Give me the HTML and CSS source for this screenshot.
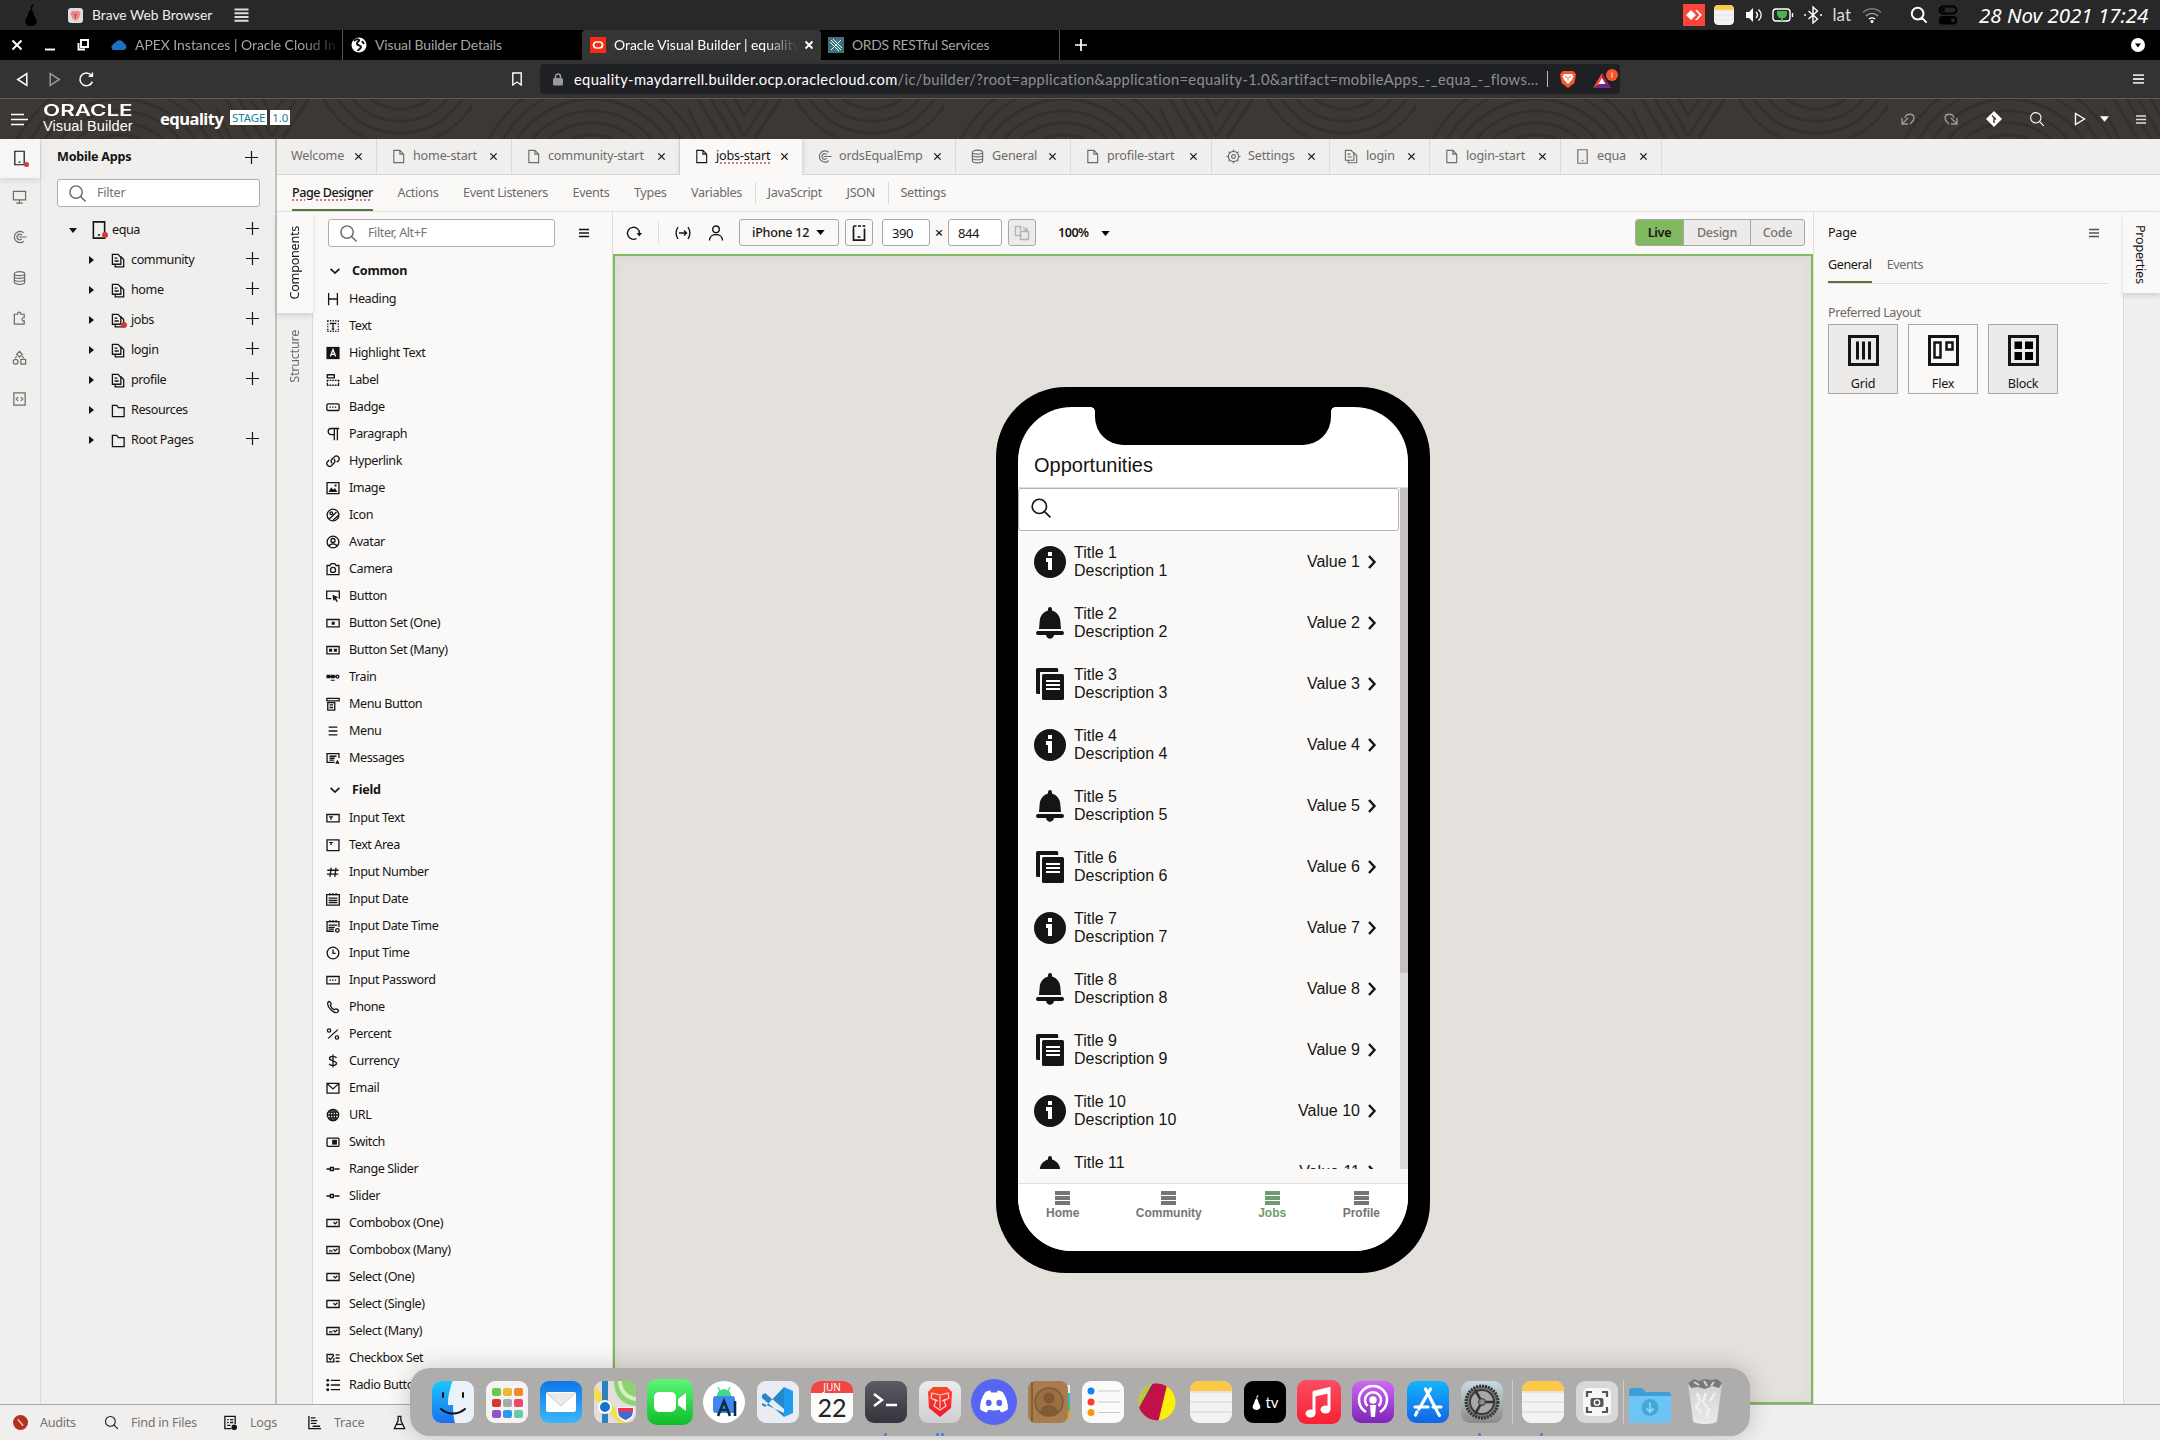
FILE: index.html
```html
<!DOCTYPE html>
<html lang="en">
<head>
<meta charset="utf-8">
<title>Oracle Visual Builder | equality</title>
<link rel="stylesheet" href="styles.css">
</head>
<body>
<svg class="defs" aria-hidden="true">
<defs>
<linearGradient id="g-blue" x2="0" y2="1"><stop stop-color="#1076e8"/><stop offset="1" stop-color="#3bb8f7"/></linearGradient>
<linearGradient id="g-green" x2="0" y2="1"><stop stop-color="#5df777"/><stop offset="1" stop-color="#0dbd29"/></linearGradient>
<linearGradient id="g-finder" x2="0" y2="1"><stop stop-color="#19c8fb"/><stop offset="1" stop-color="#1c6ff0"/></linearGradient>
<linearGradient id="g-dark" x2="0" y2="1"><stop stop-color="#5c5a62"/><stop offset="1" stop-color="#35333b"/></linearGradient>
<linearGradient id="g-light" x2="0" y2="1"><stop stop-color="#ececec"/><stop offset="1" stop-color="#cfcfd2"/></linearGradient>
<linearGradient id="g-red" x2="0" y2="1"><stop stop-color="#fb4d64"/><stop offset="1" stop-color="#fa1f31"/></linearGradient>
<linearGradient id="g-purple" x2="0" y2="1"><stop stop-color="#cf68f5"/><stop offset="1" stop-color="#7c25b8"/></linearGradient>
<linearGradient id="g-app" x2="0" y2="1"><stop stop-color="#14b4fb"/><stop offset="1" stop-color="#1265e6"/></linearGradient>
<linearGradient id="g-gear" x2="0" y2="1"><stop stop-color="#c6dbe3"/><stop offset="1" stop-color="#8b8a87"/></linearGradient>
<linearGradient id="g-trash" x2="0" y2="1"><stop stop-color="#cfd2d2"/><stop offset="1" stop-color="#e9eae9"/></linearGradient>
<linearGradient id="g-lion" x2="0" y2="1"><stop stop-color="#fb4a25"/><stop offset="1" stop-color="#f7142f"/></linearGradient>
</defs>
<symbol id="x" viewBox="0 0 10 10"><path d="M1.5 1.5l7 7m0-7l-7 7"/></symbol>
<symbol id="plus" viewBox="0 0 14 14"><path d="M7 0v14M0 7h14"/></symbol>
<symbol id="burger" viewBox="0 0 12 12"><path d="M0 1.8h12M0 6h12M0 10.2h12"/></symbol>
<symbol id="caret" viewBox="0 0 10 6"><path d="M0 0h10L5 6z"/></symbol>
<symbol id="search" viewBox="0 0 20 20"><path d="M13.500 13.500L18.500 18.500M15 8.500a6.500 6.500 0 1 1-13 0a6.500 6.500 0 1 1 13 0z"/></symbol>
<symbol id="page" viewBox="0 0 16 16"><path d="M3 1.500h6.500L13.500 5.500v9H3zM9.500 1.500v4h4"/></symbol>
<symbol id="pages" viewBox="0 0 16 16"><path d="M1.500 1.500h6L10.500 4.500v7.500h-9zM3.800 5.500h3M3.800 8.500h4.500M4.500 12v2.700h9V7L10.500 4"/></symbol>
<symbol id="mobile" viewBox="0 0 16 16"><path d="M3 .8h10v14.400H3zM7 12.500h2"/></symbol>
<symbol id="desktop" viewBox="0 0 16 16"><path d="M1.500 2h13v9h-13zM8 11v3.500M4.500 14.500h7"/></symbol>
<symbol id="conn" viewBox="0 0 16 16"><path d="M12.500 3.500a6 6 0 1 0 0 9M10.500 6a3 3 0 1 0 0 4M7 8h8.500"/></symbol>
<symbol id="db" viewBox="0 0 16 16"><path d="M2.500 3.500c0-3 11-3 11 0v9c0 3-11 3-11 0zM2.500 3.500c0 2.600 11 2.600 11 0M2.500 6.500c0 2.600 11 2.600 11 0M2.500 9.500c0 2.600 11 2.600 11 0"/></symbol>
<symbol id="puzzle" viewBox="0 0 16 16"><path d="M2.500 4H6c-.5-3 4-3 3.500 0H13v3.500c-3-.5-3 4 0 3.500V14.500H2.500z"/></symbol>
<symbol id="shapes" viewBox="0 0 16 16"><path d="M8 1l3 3-3 3-3-3zM9.500 9.500h5v5h-5zM6.500 12a2.600 2.600 0 1 1-5.200 0a2.600 2.600 0 1 1 5.200 0zM5 6L3.500 8M11 6l1.500 2"/></symbol>
<symbol id="code" viewBox="0 0 16 16"><path d="M2 1.500h12v13H2zM6.500 6l-2 2 2 2M9.500 6l2 2-2 2"/></symbol>
<symbol id="folder" viewBox="0 0 16 16"><path d="M1.500 2.500h4.500l2 2.500H14v9.500H1.500z"/></symbol>
<symbol id="gear" viewBox="0 0 16 16"><path d="M13.500 8a5.500 5.500 0 1 1-11 0a5.500 5.500 0 1 1 11 0zM10 8a2 2 0 1 1-4 0a2 2 0 1 1 4 0zM8 .5v2M8 13.500v2M.5 8h2M13.500 8h2M2.700 2.700l1.400 1.400M11.900 11.900l1.400 1.400M2.700 13.300l1.400-1.400M11.900 4.100l1.400-1.400"/></symbol>
<symbol id="chev" viewBox="0 0 10 6"><path d="M.6.8L5 5 9.400.8"/></symbol>

<symbol id="c-heading" viewBox="0 0 16 16"><path d="M3 1v14M13 1v14M3 8h10"/></symbol>
<symbol id="c-text" viewBox="0 0 16 16"><path d="M1.500 2h13M1.500 14h13M2 2v12M14 2v12" stroke-dasharray="1.500 1.500"/><path d="M5 6V5h6v1M8 5v6.500M6.500 11.500h3"/></symbol>
<symbol id="c-hl" viewBox="0 0 16 16"><path class="fill" d="M.5 1h15v14H.5z"/><path d="M5 12l3-8 3 8M6 9.500h4" stroke="#fff"/></symbol>
<symbol id="c-label" viewBox="0 0 16 16"><path d="M1.500 2h8v3.500h-8z"/><path d="M1 8.500h14M1 14h14M1.500 8v6M14.500 8v6" stroke-dasharray="2 1"/></symbol>
<symbol id="c-badge" viewBox="0 0 16 16"><rect x="1" y="4.500" width="14" height="7.500" rx="1.500"/><path d="M4 8.200h8" stroke-dasharray="1.600 1.400"/></symbol>
<symbol id="c-para" viewBox="0 0 16 16"><path d="M15 1.700H6a3.500 3.500 0 0 0 0 7h3.500M9.500 1.700V15M13 1.700V15"/></symbol>
<symbol id="c-link" viewBox="0 0 16 16"><path d="M7 10.500a3.200 3.200 0 0 1-.2-4.500l3-3a3.200 3.200 0 0 1 4.500 4.500l-2 2M9 5.800a3.200 3.200 0 0 1 .2 4.500l-3 3a3.200 3.200 0 0 1-4.500-4.500l2-2"/></symbol>
<symbol id="c-image" viewBox="0 0 16 16"><path d="M1.200 1.800h13.600v12.700H1.200z"/><path class="fill" d="M3 12.500L6 7l2.200 3 2-2 2.800 4.500zM9.800 4h2.200v2.200H9.800z"/></symbol>
<symbol id="c-icon" viewBox="0 0 16 16"><circle cx="8" cy="8" r="6.700"/><circle cx="6" cy="6" r="1.600"/><path d="M3.500 12.500l3-2.500L12 4.500M8 14l6-5.500"/></symbol>
<symbol id="c-avatar" viewBox="0 0 16 16"><circle cx="8" cy="8" r="6.700"/><circle cx="8" cy="6.300" r="2.300"/><path d="M3.500 12.800c1-3.500 8-3.500 9 0"/></symbol>
<symbol id="c-camera" viewBox="0 0 16 16"><path d="M1.200 4h3.300L6 1.800h4L11.500 4h3.300v10.500H1.200z"/><circle cx="8" cy="9" r="2.900"/></symbol>
<symbol id="c-button" viewBox="0 0 16 16"><path d="M6 11H.8V2.500h14.400V11"/><path class="fill" d="M7.500 6.500l6.500 3-2.500 1.200 2 3.300-1.500.9-2-3.200-1.800 1.800z"/></symbol>
<symbol id="c-bs1" viewBox="0 0 16 16"><path d="M1 4h14v8.500H1z"/><path class="fill" d="M6.500 6.500h3.500v3.500H6.500z"/></symbol>
<symbol id="c-bs2" viewBox="0 0 16 16"><path d="M1 4h14v8.500H1z"/><path class="fill" d="M3.500 6.500H7v3.500H3.500zM9 6.500h3.500v3.500H9z"/></symbol>
<symbol id="c-train" viewBox="0 0 16 16"><path class="fill" d="M.5 5.500h4.500v4H.5zM5.500 5.500h4.500v4H5.500zM5.500 11h4.500v1.300H5.500z"/><path d="M4 7.500h8"/><circle cx="13" cy="7.500" r="1.700"/></symbol>
<symbol id="c-mbtn" viewBox="0 0 16 16"><path d="M1 1.500h14v3H1zM2 6.500h8v8.500H2zM4 9h4M4 12h4"/></symbol>
<symbol id="c-menu" viewBox="0 0 16 16"><path d="M3 3.500h10M3 8h10M3 12.500h10"/></symbol>
<symbol id="c-msg" viewBox="0 0 16 16"><path d="M10 13H1.200V3h13.600v5M4 6h8M4 8.300h6M4 10.500h5"/><path class="fill" d="M13 10l2.500 4.500h-5z"/></symbol>
<symbol id="c-itext" viewBox="0 0 16 16"><path d="M1 4h14v8.500H1z"/><path class="fill" d="M3.500 6H8v1.300H6.500V10H5V7.300H3.500z"/></symbol>
<symbol id="c-area" viewBox="0 0 16 16"><path d="M1.200 2.200h13.600v12.300H1.200z"/><path class="fill" d="M3.500 4.500H8v1.300H6.500V8H5V5.800H3.500z"/></symbol>
<symbol id="c-num" viewBox="0 0 16 16"><path d="M6 3L4.500 13.500M11.500 3L10 13.500M1.500 6h13M1 10.500h13"/></symbol>
<symbol id="c-date" viewBox="0 0 16 16"><path d="M.8 3h14.400v12H.8zM4.500 1v3M8 1v3M11.500 1v3M3 7h10M3 9.500h10M3 12h10"/></symbol>
<symbol id="c-dt" viewBox="0 0 16 16"><path d="M9 14H1.200V3h13.600v6M4.500 1v3M8 1v3M11.500 1v3M3 7h10M3 9.500h7M3 11.500h6"/><circle cx="13" cy="13" r="2"/></symbol>
<symbol id="c-time" viewBox="0 0 16 16"><circle cx="8" cy="8" r="6.700"/><path d="M8 4v4.500h3"/></symbol>
<symbol id="c-pass" viewBox="0 0 16 16"><path d="M1 4h14v8.500H1z"/><path d="M4 8.200h8" stroke-dasharray="1.600 1.400"/></symbol>
<symbol id="c-phone" viewBox="0 0 16 16"><path d="M2 3c1.500-2 2.500-1.500 3.500.5s-.5 2-.5 3c1 2.500 2 3.500 4.500 4.500 1 0 1-1.500 3-.5s2.500 2 .5 3.500c-3.500 2-12-5-11-11z"/></symbol>
<symbol id="c-pct" viewBox="0 0 16 16"><path d="M13.500 3L2.500 13"/><circle cx="3.500" cy="4" r="1.900"/><circle cx="12.500" cy="12" r="1.900"/></symbol>
<symbol id="c-cur" viewBox="0 0 16 16"><path d="M12 4.500C10.500 2 4 2 4 5s8 2.500 8 5.700-6.800 3.300-8.500.5M8 .5v15"/></symbol>
<symbol id="c-mail" viewBox="0 0 16 16"><path d="M1.200 2.800h13.600v11H1.200zM1.500 3L8 9l6.500-6"/></symbol>
<symbol id="c-url" viewBox="0 0 16 16"><circle cx="8" cy="8" r="6.500"/><ellipse cx="8" cy="8" rx="3" ry="6.500"/><path d="M8 1.500v13M1.500 8h13M2.500 4.700h11M2.500 11.300h11"/></symbol>
<symbol id="c-switch" viewBox="0 0 16 16"><rect x="1.200" y="3.500" width="13.600" height="9.500" rx="1"/><path class="fill" d="M7 5.500h5.500V11H7z"/></symbol>
<symbol id="c-slider" viewBox="0 0 16 16"><path d="M.5 8H5M9.500 8H15.500M5 6.300h3.400v3.400H5z"/></symbol>
<symbol id="c-combo" viewBox="0 0 16 16"><path d="M1 4h14v8H1z"/><path d="M8.500 7l2 2 2.500-2.500"/></symbol>
<symbol id="c-combom" viewBox="0 0 16 16"><path d="M1 4h14v8H1zM3.500 9h4"/><path d="M8.500 7l2 2 2.500-2.500"/></symbol>
<symbol id="c-check" viewBox="0 0 16 16"><path d="M9 8v4.500H1.200V4H9M3 7.500l2 2.500 4-5M11 4.500h4.500M11 8h4.500M11 12h4.500"/></symbol>
<symbol id="c-radio" viewBox="0 0 16 16"><path d="M5.500 2.700H16M5.500 8H16M5.500 13.300H16"/><circle class="fill" cx="2" cy="2.700" r="1.700"/><circle class="fill" cx="2" cy="8" r="1.700"/><circle class="fill" cx="2" cy="13.300" r="1.700"/></symbol>

<symbol id="p-info" viewBox="0 0 32 32"><circle cx="16" cy="16" r="16" fill="#161513"/><path d="M14 6h4v4h-4zM12 12h6v12h-4v-8h-2z" fill="#fff"/></symbol>
<symbol id="p-bell" viewBox="0 0 32 32"><path d="M14 2a2 2 0 0 1 4 0v1.500c5 1.500 8 5.500 8.300 10.500L27 22H5l.7-8C6 9 9 5 14 3.500zM4 24h24a2 2 0 0 1 0 4h-8c-1 5-7 5-8 0H4a2 2 0 0 1 0-4z" fill="#161513"/></symbol>
<symbol id="p-docs" viewBox="0 0 32 32"><path d="M3.500 0H23a1.500 1.500 0 0 1 1.200 1.500V4H6v22H3.500A1.500 1.500 0 0 1 2 24.500v-23A1.500 1.500 0 0 1 3.500 0z" fill="#161513"/><rect x="8" y="6" width="22" height="26" rx="1.500" fill="#161513"/><path d="M12 13h14M12 17h14M12 21h14" stroke="#fff" stroke-width="2"/></symbol>

<symbol id="d-notes" viewBox="0 0 42 42"><rect width="42" height="42" rx="9" fill="#f4f2f3"/><path d="M0 10V9a9 9 0 0 1 9-9h24a9 9 0 0 1 9 9v1z" fill="#fdc846"/><path d="M0 11h42M0 21h42M0 31h42" stroke="#d6d4d5"/></symbol>
<symbol id="pear" viewBox="0 0 14 22"><path d="M7 6c3 0 2 4 4 7 4 6 0 9-4 9s-8-3-4-9c2-3 1-7 4-7zM7 6c-.5-3 0-4 2-6l1 1C8 3 8 4 8 6z"/></symbol>
</svg>

<header class="macbar">
  <svg class="m-pear"><use href="#pear"/></svg>
  <svg class="m-brave" viewBox="0 0 15 15"><rect width="15" height="15" rx="3" fill="#ddd"/><path d="M4 3h7l1.500 2.500-1.800 5L7.500 13l-3.200-2.500-1.800-5z" fill="#e88"/><path d="M6 6l1.500 1L9 6M7.500 7v3" stroke="#b33" fill="none"/></svg>
  <span class="m-app">Brave Web Browser</span>
  <svg class="ln m-burger" viewBox="0 0 14 14"><path d="M0 1.500h14M0 5.200h14M0 9h14M0 12.700h14"/></svg>
  <div class="m-right">
    <svg class="i22" viewBox="0 0 22 22"><path fill="#fb443a" d="M0 0h22v22H0z"/><path fill="#fff" d="M8 6l5 5-5 5-5-5zM12 6h2l5 5-5 5h-2l4.500-5z"/></svg>
    <svg class="i20"><use href="#d-notes"/></svg>
    <svg class="i18 ln" viewBox="0 0 18 18"><path d="M1 6h3l4-4v14l-4-4H1z" fill="#fff" stroke="none"/><path d="M11 6c2 2 2 4 0 6M13.500 3.500c3.500 3.500 3.500 7.500 0 11"/></svg>
    <svg class="i22 ln" viewBox="0 0 22 18"><rect x="1" y="3" width="17" height="12" rx="3"/><path d="M20.500 7v4"/><path d="M5 5h10v4l-2 3h-2v3H9v-3H7L5 9z" fill="#4cb050" stroke="none"/></svg>
    <svg class="i20 ln" viewBox="0 0 20 20"><path d="M5.500 6l9 8-4.500 4V2l4.500 4-9 8M1 10h2M17 10h2"/></svg>
    <span class="m-lat">lat</span>
    <svg class="i20 ln" viewBox="0 0 20 20"><path d="M1 7.500c5-5 13-5 18 0" stroke="#777"/><path d="M4 11c3.500-3.500 8.500-3.500 12 0" stroke="#aaa"/><path d="M7 14c2-1.500 4-1.500 6 0"/><circle cx="10" cy="16.500" r="1.500" fill="#fff" stroke="none"/></svg>
    <svg class="m-search ln"><use href="#search"/></svg>
    <svg class="i20" viewBox="0 0 20 20"><rect x="1.500" y="1.500" width="17" height="7" rx="3.500" stroke="#000" stroke-width="1.800" fill="none"/><circle cx="5" cy="5" r="2"/><rect x=".8" y="11" width="18.400" height="8.500" rx="4"/><circle cx="15" cy="15.200" r="2" fill="#282828"/></svg>
    <span class="m-date">28 Nov 2021 17:24</span>
  </div>
</header>

<nav class="btabs">
  <div class="bwin ln">
    <svg viewBox="0 0 12 12"><path d="M1.500 1.500l9 9m0-9l-9 9"/></svg>
    <svg viewBox="0 0 12 12"><path d="M1 10.500h10"/></svg>
    <svg viewBox="0 0 12 12"><path d="M4 1h7v7H4zM1.500 4v6.500H8"/></svg>
  </div>
  <div class="btab b1"><svg viewBox="0 0 16 16"><path fill="#1b70bf" d="M2.500 13a3 3 0 0 1-.5-5.500C3 6 4 6 5 5c2-3 7-2 7.500 1C16 7 16.500 12 13 13z"/></svg><span>APEX Instances | Oracle Cloud In</span></div>
  <div class="btab b2"><svg viewBox="0 0 16 16"><circle cx="8" cy="8" r="7.500" fill="#fff"/><path d="M3 4c2-2 4-2 5-1s-3 2-2 4 4 1 4 3-3 2-3 4M11 4l2 3" stroke="#111" stroke-width="2" fill="none"/></svg><span>Visual Builder Details</span></div>
  <div class="btab b3"><svg viewBox="0 0 16 16"><path fill="#fb2a12" d="M0 0h16v16H0z"/><rect x="3.500" y="5" width="9" height="6" rx="3" fill="none" stroke="#fff" stroke-width="1.700"/></svg><span>Oracle Visual Builder | equality</span><svg class="bx ln"><use href="#x"/></svg></div>
  <div class="btab b4"><svg viewBox="0 0 16 16"><path fill="#41717a" d="M0 0h16v16H0z"/><path d="M3 3l10 10M13 3L3 13M5 2l9 9M2 5l9 9" stroke="#dff" fill="none"/></svg><span>ORDS RESTful Services</span></div>
  <svg class="bplus ln"><use href="#plus"/></svg>
  <svg class="bcirc" viewBox="0 0 14 14"><circle cx="7" cy="7" r="7" fill="#fff"/><path d="M4 5.500h6L7 9.500z"/></svg>
</nav>

<div class="addr">
  <div class="nav ln">
    <svg viewBox="0 0 14 14"><path d="M11 1.500v11L2.500 7z"/></svg>
    <svg class="dim" viewBox="0 0 14 14"><path d="M3 1.500v11L11.500 7z"/></svg>
    <svg viewBox="0 0 14 14"><path d="M12.500 9A6 6 0 1 1 11.500 3M12.500.5v3.500H9"/></svg>
  </div>
  <svg class="bkm ln" viewBox="0 0 12 14"><path d="M1.800 1h8.400v12L6 10l-4.200 3z"/></svg>
  <div class="url">
    <svg class="lock" viewBox="0 0 10 13"><rect y="5" width="10" height="7.500" rx="1.500" fill="#999"/><path d="M2.500 6V3.500a2.500 2.500 0 0 1 5 0V6" fill="none" stroke="#999" stroke-width="1.500"/></svg>
    <p>equality-maydarrell.builder.ocp.oraclecloud.com<span>/ic/builder/?root=application&amp;application=equality-1.0&amp;artifact=mobileApps_-_equa_-_flows...</span></p>
    <i></i>
    <svg class="lion" viewBox="0 0 16 18"><path fill="#fb542b" d="M3 1h10l3 3-1.500 9L8 18l-6.500-5L0 4z"/><path fill="#fff" d="M4 4h8l1.500 2.500-2 4L8 14l-3.500-3.500-2-4z"/><path d="M5 6.500l2 1M11 6.500l-2 1M8 7v3" stroke="#fb542b" fill="none"/></svg>
    <svg class="bat" viewBox="0 0 26 22"><path fill="#ff4724" d="M9 5L0 20l9-5z"/><path fill="#9e1f63" d="M9 5l9 15-9-5z"/><path fill="#662d91" d="M0 20h18l-9-5z"/><path fill="#fff" d="M9 10l3.500 6h-7z"/><circle cx="19" cy="7" r="6" fill="#fb542b"/><path d="M19 4.500v5" stroke="#fff"/></svg>
  </div>
  <svg class="amenu ln"><use href="#burger"/></svg>
</div>

<header class="ohead">
  <svg class="waves" aria-hidden="true"><defs>
    <pattern id="wv" width="472" height="80" patternUnits="userSpaceOnUse"><g fill="none" stroke="#34302c" stroke-width="3">
      <circle cx="120" cy="90" r="30"/><circle cx="120" cy="90" r="42"/><circle cx="120" cy="90" r="54"/><circle cx="120" cy="90" r="66"/><circle cx="120" cy="90" r="78"/><circle cx="120" cy="90" r="90"/><circle cx="120" cy="90" r="102"/><circle cx="120" cy="90" r="114"/>
      <path d="M236 -5l36 60 40-60M248 -5l24 42 28-42M260 -5l12 22 14-22M226 0l30 50M216 10l20 40"/>
      <circle cx="400" cy="-40" r="50"/><circle cx="400" cy="-40" r="62"/><circle cx="400" cy="-40" r="74"/><circle cx="400" cy="-40" r="86"/>
    </g></pattern></defs><rect width="100%" height="40" fill="url(#wv)"/></svg>
  <svg class="oburger ln" viewBox="0 0 17 13"><path d="M0 1.500h13M0 6.500h17M0 11.500h13"/></svg>
  <div class="logo"><b>ORACLE</b><span>Visual Builder</span></div>
  <strong class="app">equality</strong><em>STAGE</em><em>1.0</em>
  <div class="oright ln">
    <svg class="dim" viewBox="0 0 16 16"><path d="M2 7v6h6M2.500 12.500L8 7M5 7c1-5 9-5 9 0 0 3-2 4-4 6"/></svg>
    <svg class="dim" viewBox="0 0 16 16"><path d="M14 7v6H8M13.500 12.500L8 7M11 7c-1-5-9-5-9 0 0 3 2 4 4 6"/></svg>
    <svg viewBox="0 0 16 16"><path fill="#fff" stroke="none" d="M8 0l8 8-8 8-8-8z"/><path d="M6 4.500l4 4M8 6v6" stroke="#3a3632"/></svg>
    <svg><use href="#search"/></svg>
    <svg viewBox="0 0 16 16"><path d="M3.500 2.500v11l9-5.500z"/></svg>
    <svg class="car"><use href="#caret"/></svg>
    <svg class="mm"><use href="#burger"/></svg>
  </div>
</header>

<main class="ide">
  <aside class="rail ln">
    <div class="on"><svg><use href="#mobile"/></svg><i class="dot"></i></div>
    <div><svg><use href="#desktop"/></svg></div>
    <div><svg><use href="#conn"/></svg></div>
    <div><svg><use href="#db"/></svg></div>
    <div><svg><use href="#puzzle"/></svg></div>
    <div><svg><use href="#shapes"/></svg></div>
    <div><svg><use href="#code"/></svg></div>
  </aside>

  <aside class="apps">
    <div class="ahead"><b>Mobile Apps</b><svg class="ln"><use href="#plus"/></svg></div>
    <div class="filter"><svg class="ln"><use href="#search"/></svg><span>Filter</span></div>
    <div class="tree" id="tree"></div>
  </aside>

  <section class="work">
    <div class="etabs ln" id="etabs"></div>
    <div class="subtabs">
      <span class="on"><u>Page Designer</u></span><span>Actions</span><span>Event Listeners</span><span>Events</span><span>Types</span><span>Variables</span><i></i><span>JavaScript</span><span>JSON</span><i></i><span>Settings</span>
    </div>
    <div class="panes">
      <div class="vtabs"><div class="on"><span>Components</span></div><div class="rest"><span>Structure</span></div></div>
      <div class="comps">
        <div class="chead"><div class="filter"><svg class="ln"><use href="#search"/></svg><span>Filter, Alt+F</span></div><svg class="ln cm"><use href="#burger"/></svg></div>
        <div id="comps"></div>
      </div>
      <div class="design">
        <div class="tools">
          <svg class="ln t-ref" viewBox="0 0 16 16"><path d="M10.500 13.500A6 6 0 1 1 13.500 8.500"/><path d="M10.500 8h5.500l-2.700 3.500z" fill="#161513" stroke="none"/></svg>
          <i></i>
          <svg class="ln t-arr" viewBox="0 0 16 16"><path d="M3 2c-2.500 4-2.500 8 0 12M13 2c2.500 4 2.500 8 0 12M4 8h7.500M9 5.500L11.500 8 9 10.500"/></svg>
          <svg class="ln t-per" viewBox="0 0 16 16"><circle cx="8" cy="4.300" r="3.300"/><path d="M1.500 15.500c0-8 13-8 13 0"/></svg>
          <div class="sel">iPhone 12<svg><use href="#caret"/></svg></div>
          <div class="ib"><svg class="ln" viewBox="0 0 16 16"><path d="M2.500 4v11.200h11V4M6.500 12h3" stroke-width="1.700"/><path d="M2.500 1h11v3M2.500 1v3" stroke-dasharray="3 1.500"/></svg></div>
          <div class="in w1">390</div><span class="tx">×</span><div class="in w2">844</div>
          <div class="ib off"><svg class="ln" viewBox="0 0 16 16"><path d="M8 10.500H1.500v-9h5v4M6.500 6.500h8v8h-8zM9 2l4 4M13 2.500V6H9.500"/></svg></div>
          <b class="pc">100%</b><svg class="pcar"><use href="#caret"/></svg>
          <div class="modes"><span class="on">Live</span><span>Design</span><span>Code</span></div>
        </div>
        <div class="canvas">
          <div class="phone">
            <div class="screen">
              <div class="notch"></div>
              <div class="ptitle">Opportunities</div>
              <div class="pbody">
                <div class="plist"><div class="psearch"><svg class="ln"><use href="#search"/></svg></div><div id="rows"></div></div>
                <div class="pscroll"><i></i></div>
              </div>
              <div class="pnav">
                <span><i></i>Home</span><span><i></i>Community</span><span class="on"><i></i>Jobs</span><span><i></i>Profile</span>
              </div>
            </div>
          </div>
        </div>
      </div>
      <div class="props">
        <div class="phead">Page<svg class="ln"><use href="#burger"/></svg></div>
        <div class="ptabs"><span class="on">General</span><span>Events</span></div>
        <div class="plabel">Preferred Layout</div>
        <div class="lay">
          <div class="sh"><svg viewBox="0 0 31 31"><path d="M1.500 1.500h28v28H1.500z" fill="none" stroke="#161513" stroke-width="3"/><path d="M9.500 6.500v18M15.500 6.500v18M21.500 6.500v18" stroke="#161513" stroke-width="3"/></svg>Grid</div>
          <div><svg viewBox="0 0 31 31"><path d="M1.500 1.500h28v28H1.500z" fill="none" stroke="#161513" stroke-width="3"/><path d="M6.500 7.500h6v15h-6zM18.500 7.500h6v7h-6z" fill="none" stroke="#161513" stroke-width="2.500"/></svg>Flex</div>
          <div class="sh"><svg viewBox="0 0 31 31"><path d="M1.500 1.500h28v28H1.500z" fill="none" stroke="#161513" stroke-width="3"/><path d="M6.500 6.500H14V14H6.500zM17 6.500h8V14h-8zM6.500 17H14v8H6.500zM17 17h8v8h-8z"/></svg>Block</div>
        </div>
      </div>
      <div class="rtab"><div><span>Properties</span></div></div>
    </div>
  </section>
</main>

<footer class="status">
  <svg viewBox="0 0 14 14"><circle cx="7" cy="7" r="7" fill="#b3311f"/><path d="M4.500 4l5 6" stroke="#eecfc9" stroke-width="1.300"/></svg><span class="s1">Audits</span>
  <svg class="ln"><use href="#search"/></svg><span class="s2">Find in Files</span>
  <svg class="ln" viewBox="0 0 16 16"><path d="M9 14.500H2v-13h11v8M4.500 5h1.500M7.500 5H11M4.500 8H6M7.500 8H11M4.500 11H8"/><circle cx="12" cy="13" r="2.300" fill="#161513"/></svg><span class="s3">Logs</span>
  <svg class="ln" viewBox="0 0 16 16"><path d="M2 1v13.500h13M4 3h5M4 6h7M4 9h6M6 12h8"/></svg><span class="s4">Trace</span>
  <svg class="ln" viewBox="0 0 16 16"><path d="M6 1.500h4M6.500 1.500V6L2.500 14.500h11L9.500 6V1.500M5 10h6"/></svg>
</footer>

<div class="dock">
  <svg viewBox="0 0 42 42"><rect width="42" height="42" rx="9" fill="#eaf1f8"/><path d="M9 0h11.500c-2.500 8-4.500 14-4.500 24h5c0 7 .5 12 2 18H9a9 9 0 0 1-9-9V9a9 9 0 0 1 9-9z" fill="url(#g-finder)"/><path d="M11 12v4M31 12v4M9 28c7 6 17 6 24 0" stroke="#111" stroke-width="2" stroke-linecap="round" fill="none"/></svg>
  <svg viewBox="0 0 42 42"><rect width="42" height="42" rx="9" fill="#f3f3f4"/><g><rect x="6" y="7" width="9" height="8" rx="2" fill="#6cc845"/><rect x="17" y="7" width="9" height="8" rx="2" fill="#f2b632"/><rect x="28" y="7" width="9" height="8" rx="2" fill="#ee8a2c"/><rect x="6" y="18" width="9" height="8" rx="2" fill="#d63a2f"/><rect x="17" y="18" width="9" height="8" rx="2" fill="#a9a9ab"/><rect x="28" y="18" width="9" height="8" rx="2" fill="#ec4763"/><rect x="6" y="29" width="9" height="8" rx="2" fill="#9150cc"/><rect x="17" y="29" width="9" height="8" rx="2" fill="#3098ec"/><rect x="28" y="29" width="9" height="8" rx="2" fill="#6bc9a5"/></g></svg>
  <svg viewBox="0 0 42 42"><rect width="42" height="42" rx="9" fill="url(#g-blue)"/><rect x="6" y="11" width="30" height="20" rx="2" fill="#fff"/><path d="M7 12l14 13 14-13" fill="#ebebed" stroke="#c9c9cc"/></svg>
  <svg viewBox="0 0 42 42"><clipPath id="mapc"><rect width="42" height="42" rx="9"/></clipPath><g clip-path="url(#mapc)"><path fill="#e3dedb" d="M0 0h42v42H0z"/><path d="M20 0h22v25C28 24 20 15 20 0z" fill="#8fd270"/><path d="M26 0c0 10 7 17 16 18" stroke="#d5efc7" stroke-width="4" fill="none"/><path d="M0 5l8 8v12L0 17zM14 18c6 8 12 15 20 24h-9L14 30z" fill="#f5dd54"/><path d="M8 0h6v42H8z" fill="#2c82bf"/></g><circle cx="11" cy="26" r="6" fill="#1573d1" stroke="#fff" stroke-width="2"/><path d="M24 27h15c2 8-2 11-7.500 13C26 38 22 35 24 27z" fill="#3e6fce" stroke="#fff" stroke-width="1.500"/><path d="M24 27h15v4H24z" fill="#e0395a"/></svg>
  <svg class="lg" viewBox="0 0 46 46"><rect width="46" height="46" rx="10" fill="url(#g-green)"/><rect x="7" y="13" width="22" height="20" rx="5" fill="#fff"/><path d="M31 20l8-6v18l-8-6z" fill="#fff"/></svg>
  <svg viewBox="0 0 42 42"><circle cx="21" cy="21" r="21" fill="#fff"/><path d="M14 15c0-9 14-9 14 0z" fill="#3ddb85"/><path d="M15 6l2 4M27 6l-2 4" stroke="#3ddb85" stroke-width="1.300"/><rect x="10" y="15" width="22" height="17" rx="3" fill="#4285f4"/><path d="M15 35l6-15 6 15M17 29h8M32 20v15" stroke="#083042" stroke-width="2.600" fill="none"/></svg>
  <svg viewBox="0 0 42 42"><rect width="42" height="42" rx="9" fill="#e9ecf2"/><path d="M27 6L8 26l-3-2v-2L27 32v4l-1-1L5 17v-3l3-2 19 16z" fill="#2489ca"/><path d="M27 6l9 4v22l-9 4z" fill="#1f9cf0"/></svg>
  <svg viewBox="0 0 42 42"><rect width="42" height="42" rx="9" fill="#fbfbfb"/><path d="M0 12V9a9 9 0 0 1 9-9h24a9 9 0 0 1 9 9v3z" fill="#ee4744"/><text x="21" y="10" class="cal1">JUN</text><text x="21" y="36" class="cal2">22</text></svg>
  <svg viewBox="0 0 42 42"><rect width="42" height="42" rx="9" fill="url(#g-dark)"/><path d="M9 13l8 6-8 6M21 24h11" stroke="#fff" stroke-width="2.500" fill="none"/></svg>
  <svg viewBox="0 0 42 42"><rect width="42" height="42" rx="9" fill="url(#g-light)"/><path d="M14 6h14l5 5-1 16-11 9-11-9-1-16z" fill="url(#g-lion)"/><path d="M13 12l8 2 8-2 1 5-5 3 2 5-6 4-6-4 2-5-5-3zM21 15v12M15 18l4 2M27 18l-4 2" stroke="#f3d5d5" stroke-width="1.200" fill="none"/></svg>
  <svg class="lg" viewBox="0 0 48 48"><circle cx="24" cy="24" r="24" fill="#5865f2"/><path d="M15 13.500c1.500-.8 3.500-1.200 5-1.400l1 1.900h6l1-1.900c1.500.2 3.500.6 5 1.400 4 6 6 12 5.500 18-2 1.800-4.500 2.800-7 3.500l-1.700-2.800c-4 1-7.600 1-11.600 0L16.500 35c-2.500-.7-5-1.700-7-3.500C9 25.500 11 19.500 15 13.500z" fill="#fff"/><ellipse cx="18.500" cy="25" rx="3" ry="3.300" fill="#5865f2"/><ellipse cx="29.500" cy="25" rx="3" ry="3.300" fill="#5865f2"/></svg>
  <svg viewBox="0 0 42 42"><path d="M38 4h4v8h-4z" fill="#eee"/><path d="M38 12h4v9h-4z" fill="#38b5e5"/><path d="M38 21h4v9h-4z" fill="#45bd5c"/><path d="M38 30h4v8h-4z" fill="#f3a02b"/><rect width="40" height="42" rx="8" fill="#a87c4f"/><path d="M4 1v40" stroke="#84602f" stroke-width="2"/><circle cx="21" cy="21" r="14" fill="#9a6f43" stroke="#805a33" stroke-width="1.500"/><circle cx="21" cy="17" r="5.500" fill="#805a33"/><path d="M12 31c1-9 17-9 18 0-5 5-13 5-18 0z" fill="#805a33"/></svg>
  <svg viewBox="0 0 42 42"><rect width="42" height="42" rx="9" fill="#fafafa"/><circle cx="9" cy="10" r="3.500" fill="#1382fb"/><circle cx="9" cy="21" r="3.500" fill="#fb3c31"/><circle cx="9" cy="31.500" r="3.500" fill="#fb980a"/><path d="M16 10h22M16 21h22M16 31.500h22" stroke="#c9c9c9"/></svg>
  <svg viewBox="0 0 42 42"><clipPath id="cc"><circle cx="21" cy="21" r="18.500"/></clipPath><g clip-path="url(#cc)"><path fill="#fcee0c" d="M0 0h42v42H0z"/><path fill="#b5c840" d="M0 0h19L2 32z"/><path fill="#6d2b35" d="M0 32L18 0h4L4 34z"/><path fill="#c2104d" d="M20 0h12L22 42H0V32z"/><path fill="#8ea52c" d="M31 42l10-14v14z"/></g></svg>
  <svg><use href="#d-notes"/></svg>
  <svg viewBox="0 0 42 42"><rect width="42" height="42" rx="9"/><use href="#pear" x="7" y="14" width="11" height="15" fill="#fff"/><text x="28" y="27" class="tv">tv</text></svg>
  <svg class="md" viewBox="0 0 44 44"><rect width="44" height="44" rx="9" fill="url(#g-red)"/><path d="M17 33V13l15-4v20" stroke="#fff" stroke-width="3" fill="none"/><path d="M16 11l17-4v6l-17 4z" fill="#fff"/><ellipse cx="13.500" cy="33.500" rx="5" ry="4" fill="#fff"/><ellipse cx="28.500" cy="29.500" rx="5" ry="4" fill="#fff"/></svg>
  <svg viewBox="0 0 42 42"><rect width="42" height="42" rx="9" fill="url(#g-purple)"/><path d="M14 31a14 14 0 1 1 14 0M15.500 25a8 8 0 1 1 11 0" stroke="#fff" stroke-width="2.500" fill="none"/><circle cx="21" cy="19" r="3.700" fill="#fff"/><path d="M18 24h6l-1 12h-4z" fill="#fff"/></svg>
  <svg viewBox="0 0 42 42"><rect width="42" height="42" rx="9" fill="url(#g-app)"/><path d="M23.500 8L12 28M18.500 8L30 30M8 26h13M26 26h8M10 31l-1.500 3M31 32l1.500 2.500" stroke="#fff" stroke-width="3.200" stroke-linecap="round"/></svg>
  <svg viewBox="0 0 42 42"><rect width="42" height="42" rx="9" fill="url(#g-gear)"/><circle cx="21" cy="21" r="16" fill="#777" stroke="#333" stroke-width="3" stroke-dasharray="2 1"/><circle cx="21" cy="21" r="12" fill="#a8a8a8" stroke="#3c3c3c" stroke-width="2"/><path d="M21 21L14 9M21 21h13M21 21l-7 12" stroke="#333" stroke-width="2.500"/><circle cx="21" cy="21" r="3.500" fill="#888" stroke="#333"/></svg>
  <i class="dsep"></i>
  <svg><use href="#d-notes"/></svg>
  <svg viewBox="0 0 42 42"><rect width="42" height="42" rx="9" fill="#d8d8d8"/><rect x="7" y="7" width="28" height="28" rx="5" fill="#f6f6f6"/><path d="M11 16v-5h5M26 11h5v5M31 26v5h-5M16 31h-5v-5" stroke="#555" stroke-width="2.200" fill="none"/><rect x="14.500" y="17" width="13" height="9" rx="2" fill="#555"/><circle cx="21" cy="21.500" r="2.700" fill="#555" stroke="#fff" stroke-width="1.300"/></svg>
  <i class="dsep s"></i>
  <svg viewBox="0 0 42 42"><path d="M0 10a3 3 0 0 1 3-3h10l4 4h22a3 3 0 0 1 3 3v20H0z" fill="#3c9fd8"/><path d="M0 15h42v24a3 3 0 0 1-3 3H3a3 3 0 0 1-3-3z" fill="#6cc5f4"/><circle cx="21" cy="26.500" r="8.500" fill="#44a7dc"/><path d="M21 21.500v9M17.500 27.500l3.500 3.500 3.500-3.500" stroke="#8dd4f8" stroke-width="1.800" fill="none"/></svg>
  <svg class="lg" viewBox="0 0 46 46"><path d="M6 4h34l-5 38c0 4-24 4-24 0z" fill="url(#g-trash)"/><path d="M6 4l6-4 5 2 6-2 6 1 6-1 5 4-3 5-7-2-7 3-7-2-7 1z" fill="#77797b"/><path d="M12 3l5 3M22 2l3 5M32 3l-3 4" stroke="#dcd" stroke-width="2"/><path d="M15 14l3 8-4 6 6 6M24 14l-3 9 6 8-3 8M33 14l-5 8" stroke="#f0f0ee" stroke-width="2.500" fill="none"/></svg>
  <b class="run r1"></b><b class="run r2"></b><b class="run r3"></b><b class="run r4"></b><b class="run r5"></b>
</div>
<script src="app.js"></script>
</body>
</html>
```
FILE: styles.css
```css
* { box-sizing: border-box; }
html, body { margin: 0; height: 100%; }
body {
  width: 2160px; height: 1440px; overflow: hidden;
  display: flex; flex-direction: column;
  font-family: "Noto Sans", "Open Sans", sans-serif;
  font-size: 12.6px; line-height: 18px; letter-spacing: -.25px; color: #161513; background: #f0efee;
}
svg { display: block; flex: none; width: 16px; height: 16px; overflow: visible; }
.defs { position: absolute; width: 0; height: 0; overflow: hidden; }
.ln, .ln svg { fill: none; stroke: currentColor; stroke-width: 1.4; }
.fill { fill: currentColor; stroke: none; }
p { margin: 0; }

/* desktop top bar */
.macbar { height: 30px; flex: none; background: #282828; color: #fff; display: flex; align-items: center; padding: 0 6px 0 24px; letter-spacing: 0; }
.m-pear { width: 14px; height: 22px; }
.m-brave { margin-left: 30px; width: 15px; height: 15px; }
.m-app { margin-left: 9px; width: 142px; font: 13.8px/20px Lato, sans-serif; color: #eee; white-space: nowrap; }
.m-burger { width: 15px; height: 14px; color: #ddd; stroke-width: 2 !important; }
.m-right { margin-left: auto; display: flex; align-items: center; }
.i22 { width: 22px; height: 22px; } .i20 { width: 20px; height: 20px; } .i18 { width: 18px; height: 18px; }
.m-right svg + svg { margin-left: 9px; }
.m-right svg.i18 { margin-left: 11px; }
.m-lat { margin: 0 11px 0 10px; font: 17px/20px Lato, sans-serif; color: #ddd; }
.m-right .m-search { margin-left: 28px; width: 18px; height: 18px; stroke-width: 2.2; }
.m-right .m-search + svg { margin-left: 10px; }
.m-date { margin-left: 21px; width: 175px; font: italic 20.5px/28px "Noto Sans", sans-serif; white-space: nowrap; }

/* browser tabs */
.btabs { height: 30px; flex: none; background: #000; color: #a5a5a5; display: flex; align-items: center; font: 13.9px/20px Lato, sans-serif; letter-spacing: 0; white-space: nowrap; }
.bwin { width: 103px; display: flex; gap: 21px; padding-left: 11px; color: #fff; }
.bwin svg { width: 12px; height: 12px; stroke-width: 1.9; }
.btab { height: 30px; display: flex; align-items: center; gap: 8px; padding-left: 8px; overflow: hidden; }
.b1 { width: 240px; border-right: 1px solid #555; }
.b1 span { width: 207px; overflow: hidden; -webkit-mask: linear-gradient(90deg, #000 80%, transparent); mask: linear-gradient(90deg, #000 80%, transparent); }
.b2 { width: 239px; letter-spacing: -.1px; }
.b3 { width: 239px; background: #353535; color: #fff; border-radius: 4px 4px 0 0; }
.b3 span { width: 184px; overflow: hidden; -webkit-mask: linear-gradient(90deg, #000 82%, transparent); mask: linear-gradient(90deg, #000 82%, transparent); }
.b3 .bx { width: 10px; height: 10px; stroke-width: 1.9; margin-left: -2px; }
.b4 { width: 239px; border-right: 1px solid #555; padding-left: 7px; letter-spacing: -.27px; }
.bplus { margin-left: 15px; width: 12px; height: 12px; color: #fff; stroke-width: 2; }
.bcirc { margin-left: auto; margin-right: 15px; width: 14px; height: 14px; }

/* address bar */
.addr { height: 39px; flex: none; background: #333; border-bottom: 1px solid #5b5b5b; display: flex; align-items: center; color: #fff; letter-spacing: 0; }
.nav { display: flex; gap: 17px; width: 511px; padding-left: 15px; }
.nav svg { width: 15px; height: 15px; }
.dim { color: #999; }
.bkm { width: 12px; height: 14px; }
.url { margin-left: 17px; width: 1080px; height: 30px; border-radius: 4px; background: #1f2024; display: flex; align-items: center; padding-left: 13px; }
.url .lock { width: 10px; height: 13px; }
.url p { margin-left: 11px; width: 965px; font: 14.7px/20px Lato, sans-serif; letter-spacing: .35px; white-space: nowrap; }
.url p span { color: #8e9092; }
.url i { margin-left: 8px; width: 1px; height: 16px; background: #bbb; }
.url .lion { margin-left: 12px; width: 16px; height: 18px; }
.url .bat { margin-left: 17px; width: 26px; height: 22px; }
.amenu { margin-left: auto; margin-right: 16px; width: 11px; height: 12px; stroke-width: 2; color: #ddd; }

/* product header */
.ohead { position: relative; height: 40px; flex: none; background: #3c3834; color: #fff; display: flex; align-items: center; }
.waves { position: absolute; inset: 0; width: 100%; height: 40px; overflow: hidden; }
.ohead > :not(.waves) { position: relative; }
.oburger { margin-left: 11px; width: 17px; height: 13px; stroke-width: 1.7; }
.logo { margin-left: 15px; width: 117px; display: flex; flex-direction: column; align-items: flex-start; letter-spacing: 0; margin-top: -1px; }
.logo b { font: 600 15.6px/15px "Inter", sans-serif; transform: scaleX(1.43); transform-origin: 0 50%; white-space: nowrap; }
.logo span { font: 14.5px/17px "Liberation Sans", sans-serif; letter-spacing: .1px; white-space: nowrap; }
.app { width: 70px; font-size: 16.500px; letter-spacing: -.5px; }
.ohead em { font-style: normal; font-size: 11.5px; line-height: 15px; height: 15px; background: #fff; color: #227e9e; padding: 0 2px; margin-right: 3px; margin-top: -3px; letter-spacing: -.1px; }
.oright { margin-left: auto; margin-right: 14px; display: flex; align-items: center; gap: 27px; }
.oright .car { width: 9px; height: 6px; fill: #fff; stroke: none; margin-left: -15px; }
.oright .mm { width: 10px; height: 11px; stroke-width: 2; color: #ddd; }

/* frame */
.ide { height: 1265px; flex: none; display: flex; }
.rail { width: 41px; border-right: 1px solid #dcdad8; color: #6d6b68; }
.rail div { height: 40.3px; display: flex; justify-content: center; align-items: center; position: relative; }
.rail .on { height: 39px; background: #f7f6f5; color: #161513; box-shadow: 0 3px 6px rgba(0,0,0,.1); }
.rail svg { width: 15px; height: 16px; margin: -2px 1px 0 0; stroke-width: 1.3; }
.dot { position: absolute; width: 5px; height: 5px; border-radius: 50%; background: #d63b33; right: 11px; bottom: 11px; }
.apps { width: 236px; border-right: 2px solid #c4c2bf; }
.ahead { height: 40px; display: flex; align-items: center; justify-content: space-between; padding: 0 17px 4px 16px; }
.ahead svg, .tree .pl { width: 13px; height: 13px; stroke-width: 1.3; }
.filter { height: 28px; border: 1px solid #b0aeac; border-radius: 3px; background: #fff; display: flex; align-items: center; color: #76736f; }
.filter svg { margin: 0 10px; width: 19px; height: 19px; color: #666; stroke-width: 1.5; }
.apps .filter { margin: 0 15px 0 16px; }
.tree { margin-top: 8px; }
.tree, .comps { letter-spacing: -.42px; }
.tree div { height: 30px; display: flex; align-items: center; padding: 0 16px 0 48px; position: relative; }
.tree div.root { padding-left: 28px; }
.tree .tri { width: 0; height: 0; border: 4px solid transparent; border-left: 5px solid #161513; border-right: 0; margin-right: 17px; }
.tree .root .tri { border: 4.5px solid transparent; border-top: 5px solid #161513; border-bottom: 0; margin-right: 13px; }
.tree svg.ic { width: 15px; height: 15px; margin-right: 5px; stroke-width: 1.4; }
.tree .root svg.ic { width: 18px; height: 18px; margin-right: 4px; }
.tree .pl { margin-left: auto; margin-top: -3px; }
.tree .dot { right: auto; left: 61px; bottom: 7px; width: 6px; height: 6px; }
.tree .jobs .dot { left: 80px; }

.work { flex: 1; display: flex; flex-direction: column; min-width: 0; background: #fbf9f8; }
.etabs { height: 36px; flex: none; display: flex; background: #f0efee; color: #6d6b68; box-shadow: inset 0 -1px #d9d7d5; }
.etabs div { display: flex; align-items: center; border-right: 1px solid #dddbd9; padding: 0 13px 2px 14px; justify-content: space-between; white-space: nowrap; letter-spacing: -.18px; }
.etabs span { margin-right: auto; }
.etabs svg { width: 15px; height: 15px; margin-right: 7px; stroke-width: 1.2; }
.etabs .cx { width: 9px; height: 9px; margin-right: 0; color: #161513; stroke-width: 1.4; }
.etabs .on { background: #fbf9f8; color: #161513; box-shadow: 0 0 6px rgba(0,0,0,.12); clip-path: inset(0 -6px 0 -6px); }
.etabs .on span, .subtabs u { text-decoration: underline dotted #d27a76 2px; text-underline-offset: 2px; }
.etabs div:nth-child(1) { width: 100px; } .etabs div:nth-child(2) { width: 135px; } .etabs div:nth-child(3) { width: 168px; }
.etabs div:nth-child(4) { width: 123px; } .etabs div:nth-child(5) { width: 153px; } .etabs div:nth-child(6) { width: 115px; }
.etabs div:nth-child(7) { width: 141px; } .etabs div:nth-child(8) { width: 118px; } .etabs div:nth-child(9) { width: 100px; }
.etabs div:nth-child(10) { width: 131px; } .etabs div:nth-child(11) { width: 101px; }
.subtabs { height: 37px; flex: none; border-bottom: 1px solid #e2e0de; display: flex; align-items: flex-start; padding: 9px 0 0 15px; color: #6d6b68; letter-spacing: -.32px; }
.subtabs span { height: 27px; margin-right: 24.5px; white-space: nowrap; }
.subtabs .on { color: #161513; border-bottom: 2px solid #55733f; font-weight: 500; letter-spacing: -.5px; }
.subtabs i { width: 1px; height: 22px; margin: -2px 12px 0 -12px; background: #dddbd9; }

.panes { flex: 1; display: flex; min-height: 0; }
.vtabs { width: 36px; display: flex; flex-direction: column; }
.vtabs div { display: flex; justify-content: center; align-items: center; }
.vtabs span { writing-mode: vertical-rl; transform: rotate(180deg); }
.vtabs .on { height: 101px; background: #fbf9f8; z-index: 1; box-shadow: 0 3px 5px rgba(0,0,0,.12); }
.vtabs .rest { flex: 1; background: #f0efee; border-right: 1px solid #dcdad8; align-items: flex-start; padding-top: 17px; color: #6d6b68; }
.comps { width: 300px; border-right: 1px solid #e0dedc; overflow: hidden; }
.chead { display: flex; align-items: flex-start; padding: 7px 0 0 15px; height: 45px; }
.chead .filter { width: 227px; }
.chead .cm { margin: 9px 0 0 24px; width: 10px; height: 10px; stroke-width: 1.8; }
.ctitle { height: 28px; display: flex; align-items: center; font-weight: 700; padding-left: 17px; letter-spacing: -.25px; }
.cgroup + .cgroup { padding-top: 5px; }
.ctitle svg { width: 10px; height: 6px; margin-right: 12px; stroke-width: 1.7; }
.citem { height: 27px; display: flex; align-items: center; padding-left: 13px; white-space: nowrap; }
.citem svg { width: 14px; height: 14px; margin-right: 9px; stroke-width: 1.5; }

.design { width: 1201px; display: flex; flex-direction: column; border-right: 1px solid #e0dedc; }
.tools { height: 42px; flex: none; display: flex; align-items: flex-start; font-weight: 500; padding-top: 7px; }
.tools > svg { margin-top: 6px; }
.tools i { width: 1px; height: 21px; background: #dddbd9; margin: 3px 16px 0 16px; }
.t-ref { margin-left: 13px; }
.t-per { margin: 0 15px 0 17px; }
.sel { width: 100px; height: 27px; border: 1px solid #aaa8a6; border-radius: 3px; display: flex; align-items: center; justify-content: space-between; padding: 0 13px 0 12px; }
.sel svg, .pcar { width: 9px; height: 5px; }
.ib { margin-left: 6px; width: 28px; height: 27px; border: 1px solid #aaa8a6; border-radius: 3px; display: grid; place-items: center; }
.ib.off { background: #edebea; color: #b5b3b1; }
.in { height: 27px; border: 1px solid #aaa8a6; border-radius: 3px; background: #fff; padding: 4px 9px; font-weight: 400; font-size: 13px; letter-spacing: -.4px; }
.w1 { width: 48px; margin-left: 9px; } .w2 { width: 54px; }
.tx { width: 18px; text-align: center; margin-top: 4px; font-size: 15px; }
.pc { margin: 5px 12px 0 22px; font-weight: 600; width: 31px; letter-spacing: -.5px; }
.tools .pcar { margin-top: 12px; }
.modes { margin: 0 8px 0 auto; display: flex; height: 27px; border: 1px solid #aaa8a6; border-radius: 3px; overflow: hidden; color: #76736f; background: #edebea; }
.modes span { width: 67px; text-align: center; line-height: 25px; border-right: 1px solid #aaa8a6; }
.modes .on { width: 48px; background: #80b95f; color: #161513; font-weight: 600; }
.modes span:last-child { width: 53px; border: 0; }
.canvas { flex: 1; border: 2px solid #80b95f; background: #e4e1dc; display: flex; justify-content: center; padding-top: 131px; align-items: flex-start; box-shadow: inset 0 0 12px rgba(120,110,100,.08); }

/* device preview */
.phone { width: 434px; height: 886px; background: #000; border-radius: 70px; padding: 20px 22px 22px; letter-spacing: 0; }
.screen { position: relative; width: 390px; height: 844px; border-radius: 54px; background: #fff; overflow: hidden; font-family: "Liberation Sans", Arial, sans-serif; font-size: 16px; display: flex; flex-direction: column; }
.notch { position: absolute; left: 77px; top: 0; width: 236px; height: 38px; background: #000; border-radius: 0 0 28px 28px; }
.notch::before, .notch::after { content: ""; position: absolute; top: 0; width: 4px; height: 4px; background: radial-gradient(circle at 0 100%, transparent 3.5px, #000 4px); left: -4px; }
.notch::after { left: auto; right: -4px; background: radial-gradient(circle at 100% 100%, transparent 3.5px, #000 4px); }
.ptitle { height: 81px; flex: none; border-bottom: 1px solid #e2e0de; padding: 46px 16px 0; font-size: 20px; line-height: 24px; }
.pbody { height: 681px; flex: none; display: flex; background: #fbf9f8; overflow: hidden; }
.plist { width: 382px; height: 681px; overflow: hidden; }
.psearch { height: 43px; width: 381px; background: #fff; border: 1px solid #b5b3b1; border-radius: 3px; padding: 8px 11px; }
.psearch svg { width: 22px; height: 22px; stroke-width: 1.5; }
.prow { height: 61px; display: flex; align-items: center; padding: 1px 24px 0 16px; line-height: 18px; }
.prow svg { width: 32px; height: 32px; margin-right: 8px; }
.prow span { margin-left: auto; margin-right: 8px; }
.prow .go { width: 8px; height: 14px; margin: 0; stroke-width: 2.4; }
.pscroll { width: 8px; background: #dcdcdc; }
.pscroll i { display: block; height: 485px; background: #c4c0c0; }
.pnav { margin-top: 14px; flex: 1; border-top: 1px solid #e2e0de; display: flex; background: #fff; font: bold 12px/14px "Liberation Sans", sans-serif; color: #757476; padding: 7px 28px 0; justify-content: space-between; position: relative; }
.pnav::before { content: ""; position: absolute; left: 0; right: 0; top: -15px; height: 14px; background: #fbf9f8; }
.pnav span { display: flex; flex-direction: column; align-items: center; height: 32px; gap: 1px; }
.pnav i { width: 15px; height: 14px; background: repeating-linear-gradient(currentColor 0 4px, transparent 4px 5px); }
.pnav .on { color: #6f9c6c; }

.props { width: 309px; padding: 7px 15px 0 14px; }
.phead { display: flex; justify-content: space-between; padding: 5px 9px 0 0; height: 26px; }
.phead svg { width: 10px; height: 10px; margin-top: 4px; stroke-width: 2; color: #55534f; }
.ptabs { margin-top: 11px; height: 28px; border-bottom: 1px solid #e0dedc; display: flex; gap: 15px; color: #6d6b68; letter-spacing: -.4px; }
.ptabs .on { color: #161513; border-bottom: 2px solid #55733f; }
.plabel { margin-top: 20px; height: 20px; color: #6d6b68; letter-spacing: -.42px; }
.lay { display: flex; gap: 10px; }
.lay div { width: 70px; height: 70px; border: 1px solid #aaa8a6; display: flex; flex-direction: column; align-items: center; padding-top: 10px; gap: 9px; line-height: 17px; }
.lay svg { width: 31px; height: 31px; }
.lay .sh { background: #edebea; }
.rtab { width: 37px; margin-left: auto; background: #f0efee; border-left: 1px solid #dcdad8; }
.rtab div { height: 81px; margin-left: -1px; background: #fbf9f8; box-shadow: 0 3px 5px rgba(0,0,0,.12); display: flex; justify-content: center; padding: 13px 4px 0 0; }
.rtab span { writing-mode: vertical-rl; }

.status { height: 36px; flex: none; border-top: 1px solid #a9a8a6; background: #f0efee; display: flex; align-items: center; padding-left: 13px; color: #76736f; }
.status svg { width: 15px; height: 15px; color: #161513; margin-right: 12px; }
.s1 { width: 64px; } .s2 { width: 92px; } .s3 { width: 57px; } .s4 { width: 58px; }

.dock { position: absolute; left: 410px; top: 1368px; width: 1340px; height: 68px; border-radius: 20px; background: #aeadab; box-shadow: 0 0 24px rgba(0,0,0,.2); display: flex; align-items: center; padding: 0 22px; gap: 12.150px; letter-spacing: 0; }
.dock svg { width: 42px; height: 42px; }
.dock .lg { width: 46px; height: 46px; margin: 0 -2px; }
.dock .md { width: 44px; height: 44px; margin: 0 -1px; }
.dsep { width: 1px; height: 44px; background: #cfcecc; margin: 0 -3px; }
.dsep.s { margin: 0 -7px; }
.cal1 { font: 10px "Noto Sans", sans-serif; fill: #fff; text-anchor: middle; }
.cal2 { font: 25px Lato, sans-serif; fill: #222; text-anchor: middle; }
.tv { font: 15px Lato, sans-serif; fill: #fff; text-anchor: middle; }
.run { position: absolute; top: 65px; width: 3px; height: 3px; border-radius: 50%; background: #3a7bf5; }
.r1 { left: 474px; } .r2 { left: 526px; } .r3 { left: 531px; } .r4 { left: 1068px; } .r5 { left: 1130px; }
```
FILE: app.js
```js
const use = (id, cls = 'ln') => `<svg class="${cls}"><use href="#${id}"/></svg>`;

const tree = [['equa', 'mobile', 'root', 1, 1], ['community', 'pages', '', 1], ['home', 'pages', '', 1], ['jobs', 'pages', 'jobs', 1, 1],
  ['login', 'pages', '', 1], ['profile', 'pages', '', 1], ['Resources', 'folder', '', 0], ['Root Pages', 'folder', '', 1]];
document.getElementById('tree').innerHTML = tree.map(([name, icon, cls, add, dot]) =>
  `<div class="${cls}"><i class="tri"></i>${use(icon, 'ln ic')}<span>${name}</span>${dot ? '<i class="dot"></i>' : ''}${add ? use('plus', 'ln pl') : ''}</div>`).join('');

const tabs = [['Welcome'], ['home-start', 'page'], ['community-start', 'page'], ['jobs-start', 'page', 'on'], ['ordsEqualEmp', 'conn'],
  ['General', 'db'], ['profile-start', 'page'], ['Settings', 'gear'], ['login', 'pages'], ['login-start', 'page'], ['equa', 'mobile']];
document.getElementById('etabs').innerHTML = tabs.map(([name, icon, cls = '']) =>
  `<div class="${cls}">${icon ? use(icon) : ''}<span>${name}</span>${use('x', 'ln cx')}</div>`).join('');

const groups = [
  ['Common', [['Heading', 'heading'], ['Text', 'text'], ['Highlight Text', 'hl'], ['Label', 'label'], ['Badge', 'badge'], ['Paragraph', 'para'],
    ['Hyperlink', 'link'], ['Image', 'image'], ['Icon', 'icon'], ['Avatar', 'avatar'], ['Camera', 'camera'], ['Button', 'button'],
    ['Button Set (One)', 'bs1'], ['Button Set (Many)', 'bs2'], ['Train', 'train'], ['Menu Button', 'mbtn'], ['Menu', 'menu'], ['Messages', 'msg']]],
  ['Field', [['Input Text', 'itext'], ['Text Area', 'area'], ['Input Number', 'num'], ['Input Date', 'date'], ['Input Date Time', 'dt'],
    ['Input Time', 'time'], ['Input Password', 'pass'], ['Phone', 'phone'], ['Percent', 'pct'], ['Currency', 'cur'], ['Email', 'mail'],
    ['URL', 'url'], ['Switch', 'switch'], ['Range Slider', 'slider'], ['Slider', 'slider'], ['Combobox (One)', 'combo'],
    ['Combobox (Many)', 'combom'], ['Select (One)', 'combo'], ['Select (Single)', 'combo'], ['Select (Many)', 'combom'],
    ['Checkbox Set', 'check'], ['Radio Button Set', 'radio']]]];
document.getElementById('comps').innerHTML = groups.map(([title, items]) =>
  `<div class="cgroup"><div class="ctitle">${use('chev')}${title}</div>${items.map(([n, i]) =>
    `<div class="citem">${use('c-' + i)}${n}</div>`).join('')}</div>`).join('');

const icons = ['p-info', 'p-bell', 'p-docs'];
document.getElementById('rows').innerHTML = Array.from({ length: 11 }, (_, k) =>
  `<div class="prow">${use(icons[k % 3], '')}<div>Title ${k + 1}<br>Description ${k + 1}</div><span>Value ${k + 1}</span><svg class="ln go" viewBox="0 0 8 14"><path d="M1 1l5.500 6L1 13"/></svg></div>`).join('');
```
